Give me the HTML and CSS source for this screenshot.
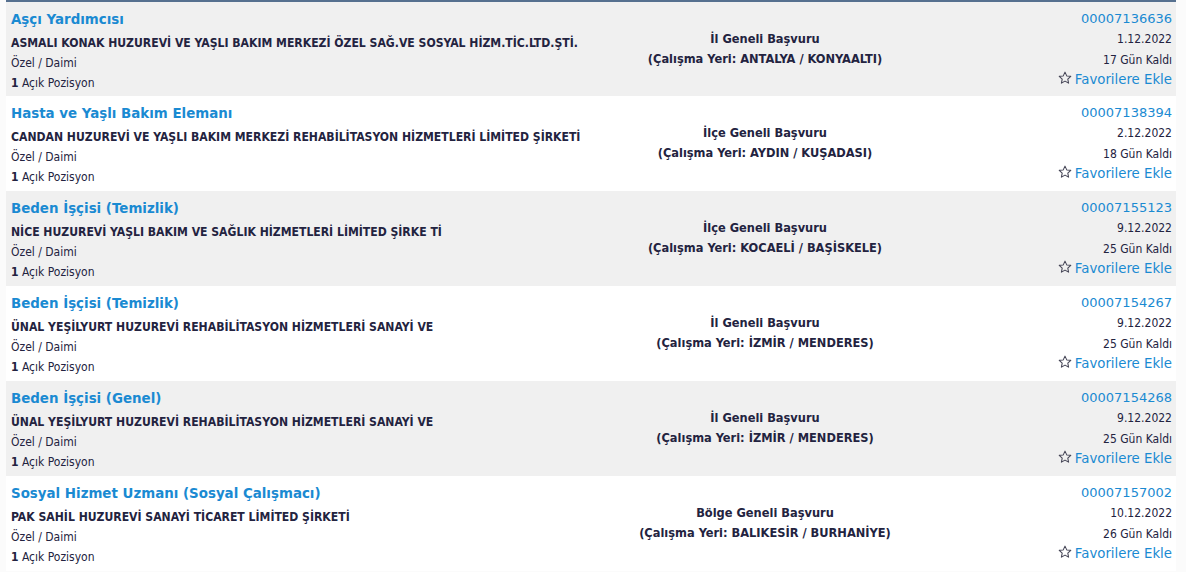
FILE: index.html
```html
<!DOCTYPE html>
<html lang="tr">
<head>
    <meta charset="UTF-8">
    <title>İş İlanları</title>
    <link rel="stylesheet" href="styles.css">
</head>
<body>

<div class="ilan-listesi">

    <div class="ilan">
        <div class="ilan-sol">
            <a class="ilan-baslik" href="#">Aşçı Yardımcısı</a>
            <div class="firma">ASMALI KONAK HUZUREVİ VE YAŞLI BAKIM MERKEZİ ÖZEL SAĞ.VE SOSYAL HİZM.TİC.LTD.ŞTİ.</div>
            <div class="detay">Özel / Daimi</div>
            <div class="detay"><b>1</b> Açık Pozisyon</div>
        </div>
        <div class="ilan-orta">
            <div>İl Geneli Başvuru</div>
            <div>(Çalışma Yeri: ANTALYA / KONYAALTI)</div>
        </div>
        <div class="ilan-sag">
            <a class="ilan-no" href="#">00007136636</a>
            <div class="detay">1.12.2022</div>
            <div class="detay kalan">17 Gün Kaldı</div>
            <a class="favori" href="#"><svg viewBox="0 0 16 16"><path d="M8 1.3l2 4.3 4.6.5-3.4 3.2.9 4.6L8 11.6l-4.1 2.3.9-4.6-3.4-3.2 4.6-.5z"/></svg>Favorilere Ekle</a>
        </div>
    </div>

    <div class="ilan">
        <div class="ilan-sol">
            <a class="ilan-baslik" href="#">Hasta ve Yaşlı Bakım Elemanı</a>
            <div class="firma">CANDAN HUZUREVİ VE YAŞLI BAKIM MERKEZİ REHABİLİTASYON HİZMETLERİ LİMİTED ŞİRKETİ</div>
            <div class="detay">Özel / Daimi</div>
            <div class="detay"><b>1</b> Açık Pozisyon</div>
        </div>
        <div class="ilan-orta">
            <div>İlçe Geneli Başvuru</div>
            <div>(Çalışma Yeri: AYDIN / KUŞADASI)</div>
        </div>
        <div class="ilan-sag">
            <a class="ilan-no" href="#">00007138394</a>
            <div class="detay">2.12.2022</div>
            <div class="detay kalan">18 Gün Kaldı</div>
            <a class="favori" href="#"><svg viewBox="0 0 16 16"><path d="M8 1.3l2 4.3 4.6.5-3.4 3.2.9 4.6L8 11.6l-4.1 2.3.9-4.6-3.4-3.2 4.6-.5z"/></svg>Favorilere Ekle</a>
        </div>
    </div>

    <div class="ilan">
        <div class="ilan-sol">
            <a class="ilan-baslik" href="#">Beden İşçisi (Temizlik)</a>
            <div class="firma">NİCE HUZUREVİ YAŞLI BAKIM VE SAĞLIK HİZMETLERİ LİMİTED ŞİRKE Tİ</div>
            <div class="detay">Özel / Daimi</div>
            <div class="detay"><b>1</b> Açık Pozisyon</div>
        </div>
        <div class="ilan-orta">
            <div>İlçe Geneli Başvuru</div>
            <div>(Çalışma Yeri: KOCAELİ / BAŞİSKELE)</div>
        </div>
        <div class="ilan-sag">
            <a class="ilan-no" href="#">00007155123</a>
            <div class="detay">9.12.2022</div>
            <div class="detay kalan">25 Gün Kaldı</div>
            <a class="favori" href="#"><svg viewBox="0 0 16 16"><path d="M8 1.3l2 4.3 4.6.5-3.4 3.2.9 4.6L8 11.6l-4.1 2.3.9-4.6-3.4-3.2 4.6-.5z"/></svg>Favorilere Ekle</a>
        </div>
    </div>

    <div class="ilan">
        <div class="ilan-sol">
            <a class="ilan-baslik" href="#">Beden İşçisi (Temizlik)</a>
            <div class="firma">ÜNAL YEŞİLYURT HUZUREVİ REHABİLİTASYON HİZMETLERİ SANAYİ VE</div>
            <div class="detay">Özel / Daimi</div>
            <div class="detay"><b>1</b> Açık Pozisyon</div>
        </div>
        <div class="ilan-orta">
            <div>İl Geneli Başvuru</div>
            <div>(Çalışma Yeri: İZMİR / MENDERES)</div>
        </div>
        <div class="ilan-sag">
            <a class="ilan-no" href="#">00007154267</a>
            <div class="detay">9.12.2022</div>
            <div class="detay kalan">25 Gün Kaldı</div>
            <a class="favori" href="#"><svg viewBox="0 0 16 16"><path d="M8 1.3l2 4.3 4.6.5-3.4 3.2.9 4.6L8 11.6l-4.1 2.3.9-4.6-3.4-3.2 4.6-.5z"/></svg>Favorilere Ekle</a>
        </div>
    </div>

    <div class="ilan">
        <div class="ilan-sol">
            <a class="ilan-baslik" href="#">Beden İşçisi (Genel)</a>
            <div class="firma">ÜNAL YEŞİLYURT HUZUREVİ REHABİLİTASYON HİZMETLERİ SANAYİ VE</div>
            <div class="detay">Özel / Daimi</div>
            <div class="detay"><b>1</b> Açık Pozisyon</div>
        </div>
        <div class="ilan-orta">
            <div>İl Geneli Başvuru</div>
            <div>(Çalışma Yeri: İZMİR / MENDERES)</div>
        </div>
        <div class="ilan-sag">
            <a class="ilan-no" href="#">00007154268</a>
            <div class="detay">9.12.2022</div>
            <div class="detay kalan">25 Gün Kaldı</div>
            <a class="favori" href="#"><svg viewBox="0 0 16 16"><path d="M8 1.3l2 4.3 4.6.5-3.4 3.2.9 4.6L8 11.6l-4.1 2.3.9-4.6-3.4-3.2 4.6-.5z"/></svg>Favorilere Ekle</a>
        </div>
    </div>

    <div class="ilan">
        <div class="ilan-sol">
            <a class="ilan-baslik" href="#">Sosyal Hizmet Uzmanı (Sosyal Çalışmacı)</a>
            <div class="firma">PAK SAHİL HUZUREVİ SANAYİ TİCARET LİMİTED ŞİRKETİ</div>
            <div class="detay">Özel / Daimi</div>
            <div class="detay"><b>1</b> Açık Pozisyon</div>
        </div>
        <div class="ilan-orta">
            <div>Bölge Geneli Başvuru</div>
            <div>(Çalışma Yeri: BALIKESİR / BURHANİYE)</div>
        </div>
        <div class="ilan-sag">
            <a class="ilan-no" href="#">00007157002</a>
            <div class="detay">10.12.2022</div>
            <div class="detay kalan">26 Gün Kaldı</div>
            <a class="favori" href="#"><svg viewBox="0 0 16 16"><path d="M8 1.3l2 4.3 4.6.5-3.4 3.2.9 4.6L8 11.6l-4.1 2.3.9-4.6-3.4-3.2 4.6-.5z"/></svg>Favorilere Ekle</a>
        </div>
    </div>

</div>

</body>
</html>
```

FILE: styles.css
```css
body {
    font-family: "DejaVu Sans Condensed", "DejaVu Sans", sans-serif;
    font-stretch: condensed;
    background-color: #fbfbfb;
    color: #232340;
    margin: 0;
    padding: 0 10px 0 6px;
}
a {
    text-decoration: none;
    color: #1a8ad2;
}
.ilan-listesi {
    border-top: 2px solid #56708f;
}
.ilan {
    display: grid;
    grid-template-columns: 594px 330px 1fr;
    height: 95px;
    box-sizing: border-box;
    background: white;
}
.ilan:first-child {
    height: 94px;
}
.ilan:nth-child(odd) {
    background: #f0f0f0;
}
.ilan-sol {
    padding: 5px 0 0 5px;
    white-space: nowrap;
}
.ilan-baslik {
    display: block;
    font-family: "DejaVu Sans", sans-serif;
    font-stretch: normal;
    font-weight: bold;
    font-size: 13.4px;
    line-height: 25px;
    margin-bottom: 1px;
}
.firma {
    font-weight: bold;
    font-size: 12.1px;
    line-height: 20px;
}
.detay {
    font-size: 12px;
    line-height: 20px;
}
.ilan-orta {
    padding-top: 27px;
    text-align: center;
    font-weight: bold;
    font-size: 12.7px;
    line-height: 20px;
}
.ilan-sag {
    padding: 7px 4px 0 0;
    text-align: right;
}
.ilan-no {
    display: block;
    font-family: "DejaVu Sans", sans-serif;
    font-stretch: normal;
    font-size: 13px;
    line-height: 20px;
}
.kalan {
    margin-top: 1px;
}
.favori {
    display: block;
    font-family: "DejaVu Sans", sans-serif;
    font-stretch: normal;
    font-size: 13.3px;
    line-height: 20px;
}
.favori svg {
    width: 14px;
    height: 14px;
    margin-right: 3px;
    vertical-align: -1px;
    fill: none;
    stroke: #444455;
    stroke-width: 1.2;
    stroke-linejoin: round;
}
```
